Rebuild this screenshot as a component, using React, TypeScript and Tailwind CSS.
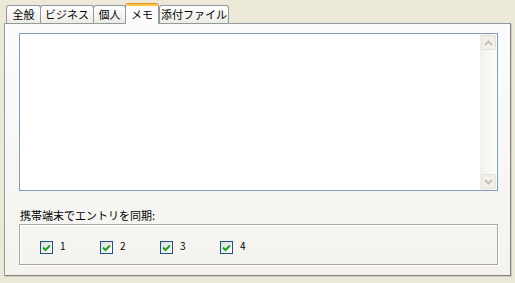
export default function App() {
  const tabs = [
    { label: "全般", w: "w-[35px]" },
    { label: "ビジネス", w: "w-[54px]" },
    { label: "個人", w: "w-[33px]" },
    { label: "メモ", w: "w-[34px]", active: true },
    { label: "添付ファイル", w: "w-[70px]" },
  ]

  const font = { fontFamily: '"Noto Sans CJK JP", "Liberation Sans", sans-serif' }

  return (
    <div
      className="w-[515px] h-[283px] bg-[#ece9d8] pl-[4px] pt-[2px] text-[11px] text-black overflow-hidden"
      style={font}
    >
      {/* tab strip */}
      <div className="flex items-end h-[21px] pl-[2px] relative z-10">
        {tabs.map((t) =>
          t.active ? (
            <div
              key={t.label}
              className={`${t.w} h-[21px] -mb-[1px] flex flex-col rounded-t-[3px] border-x border-[#919b9c] bg-[#fcfcfe] overflow-hidden`}
            >
              <div className="h-[1px] bg-[#e68b2c] rounded-t-[3px]" />
              <div className="h-[2px] bg-[#ffc73c]" />
              <div className="flex-1 flex items-center justify-center leading-none whitespace-nowrap pb-[1px]">{t.label}</div>
            </div>
          ) : (
            <div
              key={t.label}
              className={`${t.w} h-[18px] flex items-center justify-center leading-none whitespace-nowrap rounded-t-[3px] border border-b-0 border-[#919b9c] bg-gradient-to-b from-[#ffffff] to-[#ecebe5] -mr-[1px]`}
            >
              {t.label}
            </div>
          )
        )}
      </div>

      {/* panel */}
      <div className="w-[507px] h-[253px] border border-[#919b9c] border-r-[#7d8485] border-b-[#7d8485] shadow-[1px_1px_0_#d0cdbf] bg-gradient-to-b from-[#fcfcfe] to-[#f4f3ee] pt-[9px] pl-[14px]">
        {/* text area */}
        <div className="w-[479px] h-[158px] border border-[#7f9db9] bg-white flex justify-end">
          <div className="w-[17px] h-full bg-gradient-to-r from-[#f3f1ec] to-[#fdfdfa] flex flex-col justify-between py-[1px] pr-[1px]">
            <div className="w-[15px] h-[15px] ml-[1px] rounded-[2px] border border-[#e3e1d6] bg-[#f2f0e8] flex items-center justify-center">
              <svg width="9" height="6" viewBox="0 0 9 6">
                <path d="M1 5 L4.5 1.5 L8 5" stroke="#c3c1b6" strokeWidth="2" fill="none" />
              </svg>
            </div>
            <div className="w-[15px] h-[15px] ml-[1px] rounded-[2px] border border-[#e3e1d6] bg-[#f2f0e8] flex items-center justify-center">
              <svg width="9" height="6" viewBox="0 0 9 6">
                <path d="M1 1 L4.5 4.5 L8 1" stroke="#c3c1b6" strokeWidth="2" fill="none" />
              </svg>
            </div>
          </div>
        </div>

        <div className="mt-[16px] h-[16px] leading-[16px] pl-[1px]">携帯端末でエントリを同期:</div>

        {/* group box */}
        <div className="mt-[1px] w-[479px] h-[41px] border border-[#aca899] shadow-[inset_1px_1px_0_#ffffff,1px_1px_0_#ffffff] flex pl-[20px] pt-[16px]">
          {["1", "2", "3", "4"].map((n) => (
            <div key={n} className="w-[60px] flex items-start">
              <div className="w-[13px] h-[13px] border border-[#1c5180] bg-gradient-to-br from-[#dcdcd7] to-[#ffffff] flex items-center justify-center">
                <svg width="9" height="8" viewBox="0 0 9 8">
                  <path d="M1 3.5 L3.5 6 L8 1.5" stroke="#21a121" strokeWidth="2" fill="none" />
                </svg>
              </div>
              <span className="ml-[7px] -mt-[3px] text-[10px] leading-[16px]">{n}</span>
            </div>
          ))}
        </div>
      </div>
    </div>
  )
}
